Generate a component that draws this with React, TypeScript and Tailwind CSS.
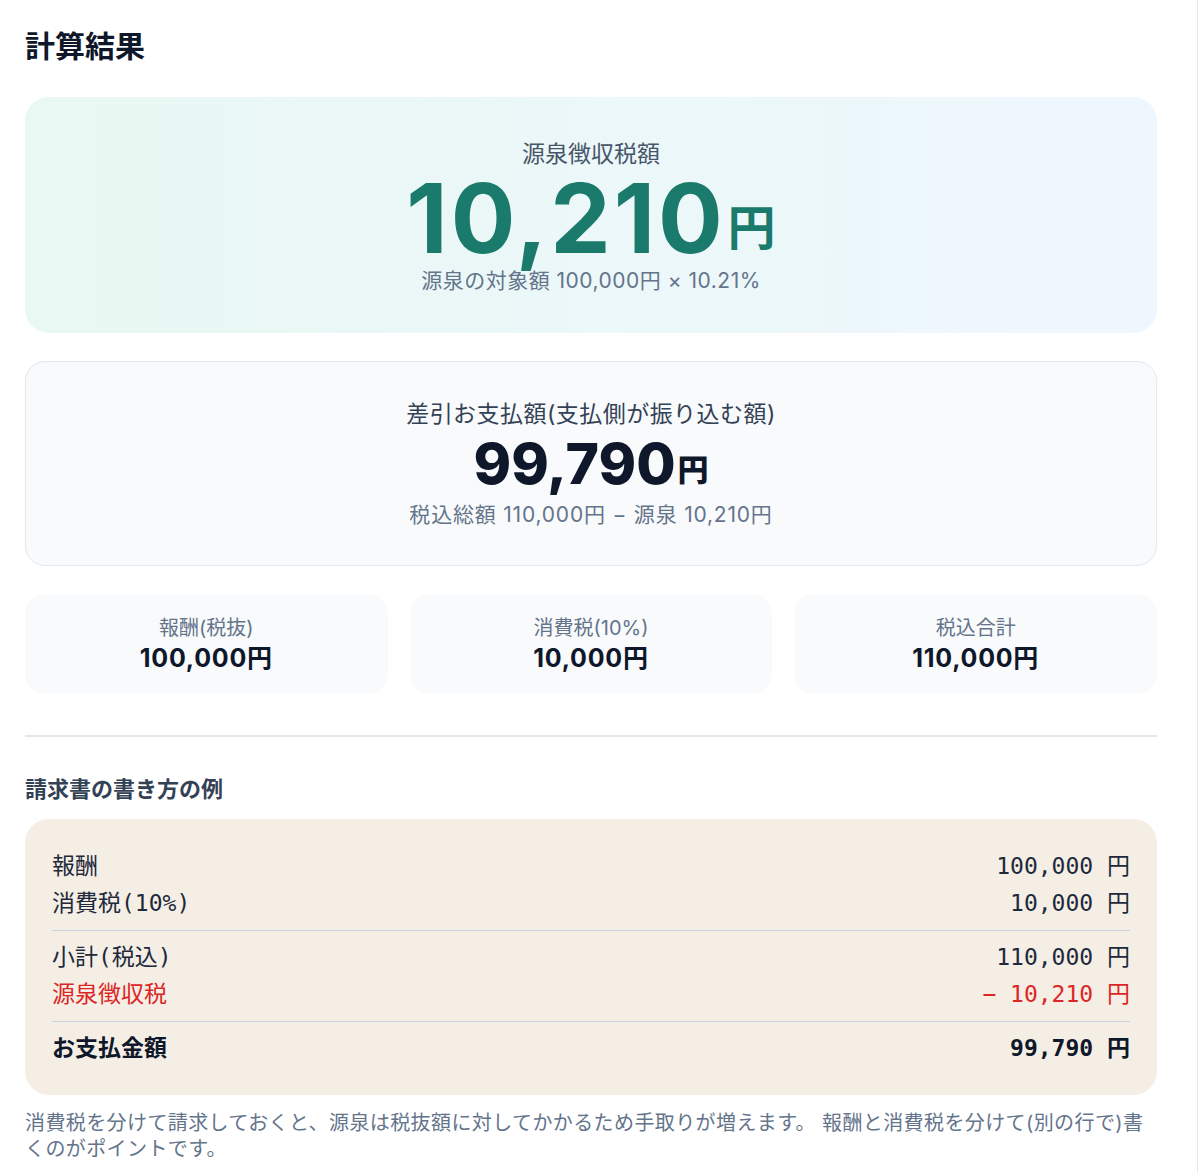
import React from 'react';

const jp = "font-['Inter','Noto_Sans_CJK_JP',sans-serif]";
const mono = "font-['DejaVu_Sans_Mono','Noto_Sans_CJK_JP',monospace]";

function StatCard({ label, value }: { label: string; value: string }) {
  return (
    <div className="flex h-[100px] flex-col items-center justify-center rounded-[20px] bg-[#f8fafc]">
      <div className="text-[20px] leading-[28px] text-[#64748b]">{label}</div>
      <div className="text-[25px] font-bold leading-[32px] tracking-[0.03em] text-[#0f172a]">{value}</div>
    </div>
  );
}

function InvoiceRow({ label, value, className }: { label: string; value: string; className?: string }) {
  return (
    <div className={`flex items-center justify-between h-[37px] ${className ?? ''}`}>
      <span>{label}</span>
      <span className="whitespace-pre">{value}</span>
    </div>
  );
}

export default function App() {
  return (
    <div className={`min-h-screen w-[1198px] border-r border-[#e5e7eb] bg-white ${jp}`}>
      <div className="ml-[25px] w-[1132px] pt-[26px] pb-4">
        {/* heading */}
        <h1 className="text-[30px] font-bold leading-[40px] text-[#0f172a]">計算結果</h1>

        {/* withholding tax */}
        <div className="mt-[31px] flex h-[236px] flex-col items-center justify-center rounded-[24px] bg-gradient-to-r from-[#e9f8f3] to-[#eef7fe]">
          <div className="mt-[2px] text-[23px] leading-[32px] text-[#475569]">源泉徴収税額</div>
          <div className="flex items-end text-[#1a7a6c]">
            <span className="text-[96px] font-bold leading-[96px] tracking-[0.03em]">10,210</span>
            <span className="mb-[14px] ml-[2px] text-[48px] font-bold leading-[48px]">円</span>
          </div>
          <div className="mt-[2px] text-[21px] leading-[26px] tracking-[0.5px] text-[#64748b]">源泉の対象額 100,000円 × 10.21%</div>
        </div>

        {/* net payment */}
        <div className="mt-[28px] flex h-[205px] flex-col items-center justify-center rounded-[20px] border border-[#e2e8f0] bg-[#f8fafc]">
          <div className="text-[23px] leading-[32px] text-[#334155] tracking-[0.02em]">差引お支払額(支払側が振り込む額)</div>
          <div className="mt-[4px] flex items-end text-[#0f172a]">
            <span className="text-[57px] font-extrabold leading-[60px]">99,790</span>
            <span className="mb-[8px] ml-[2px] text-[31px] font-extrabold leading-[32px]">円</span>
          </div>
          <div className="mt-[6px] text-[21px] leading-[30px] tracking-[0.8px] text-[#64748b]">税込総額 110,000円 − 源泉 10,210円</div>
        </div>

        {/* breakdown */}
        <div className="mt-[28px] grid grid-cols-3 gap-[22px]">
          <StatCard label="報酬(税抜)" value="100,000円" />
          <StatCard label="消費税(10%)" value="10,000円" />
          <StatCard label="税込合計" value="110,000円" />
        </div>

        <div className="mt-[41px] border-t-2 border-[#e5e7eb]" />

        <h2 className="mt-[37px] text-[22px] font-bold leading-[30px] text-[#334155]">請求書の書き方の例</h2>

        {/* invoice example */}
        <div className={`mt-[15px] rounded-[24px] bg-[#f4eee5] px-[27px] pt-[29px] pb-[28px] text-[23px] text-[#1e293b] ${mono}`}>
          <InvoiceRow label="報酬" value="100,000 円" />
          <InvoiceRow label="消費税(10%)" value="10,000 円" />
          <div className="my-[8px] border-t border-[#c7d3de]" />
          <InvoiceRow label="小計(税込)" value="110,000 円" />
          <InvoiceRow label="源泉徴収税" value="− 10,210 円" className="text-[#dc2626]" />
          <div className="my-[8px] border-t border-[#c7d3de]" />
          <InvoiceRow label="お支払金額" value="99,790 円" className="font-bold text-[#0f172a]" />
        </div>

        <p className="mt-[15px] text-[20px] leading-[26px] tracking-[0.4px] text-[#64748b]">
          消費税を分けて請求しておくと、源泉は税抜額に対してかかるため手取りが増えます。 報酬と消費税を分けて(別の行で)書くのがポイントです。
        </p>
      </div>
    </div>
  );
}
